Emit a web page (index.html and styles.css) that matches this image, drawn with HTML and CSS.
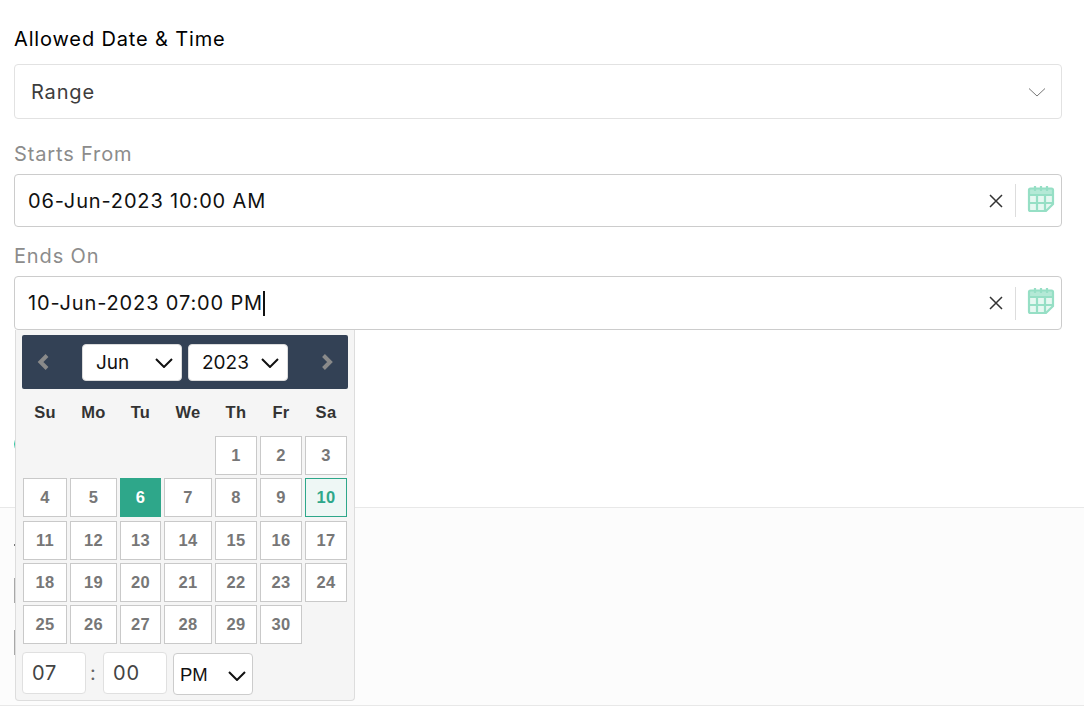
FILE: index.html
```html
<!DOCTYPE html>
<html lang="en">
<head>
  <meta charset="UTF-8">
  <title>Allowed Date &amp; Time</title>
  <link rel="stylesheet" href="styles.css">
</head>
<body>

  <div class="form-top">
    <h4 class="field-title">Allowed Date &amp; Time</h4>
    <div class="select-box">
      <span>Range</span>
      <svg class="chevron" width="18" height="10" viewBox="0 0 18 10"><path d="M1 1.5l8 7.5 8-7.5" /></svg>
    </div>

    <label class="field-label">Starts From</label>
    <div class="date-input">
      <span class="date-value">06-Jun-2023 10:00 AM</span>
      <svg class="clear-icon" width="14" height="14" viewBox="0 0 14 14"><path d="M1 1l12 12M13 1L1 13" /></svg>
      <span class="divider"></span>
      <svg class="cal-icon" width="28" height="28" viewBox="0 0 28 28"><path class="cal-fill" d="M2 9h24v9l-8 8H4a2 2 0 0 1-2-2z" /><path class="cal-band" d="M2 3.500h24v6H2z" /><path d="M3.500 3.500h21a1.500 1.500 0 0 1 1.500 1.500v14l-7 7H3.500A1.500 1.500 0 0 1 2 24.500V5a1.500 1.500 0 0 1 1.500-1.500zM2 10h24M2 18h24M10 10v16M18 10v16M8 1v5M14 1v5M20 1v5" /></svg>
    </div>

    <label class="field-label second">Ends On</label>
    <div class="date-input tall">
      <span class="date-value">10-Jun-2023 07:00 PM<i class="caret"></i></span>
      <svg class="clear-icon" width="14" height="14" viewBox="0 0 14 14"><path d="M1 1l12 12M13 1L1 13" /></svg>
      <span class="divider"></span>
      <svg class="cal-icon" width="28" height="28" viewBox="0 0 28 28"><path class="cal-fill" d="M2 9h24v9l-8 8H4a2 2 0 0 1-2-2z" /><path class="cal-band" d="M2 3.500h24v6H2z" /><path d="M3.500 3.500h21a1.500 1.500 0 0 1 1.500 1.500v14l-7 7H3.500A1.500 1.500 0 0 1 2 24.500V5a1.500 1.500 0 0 1 1.500-1.500zM2 10h24M2 18h24M10 10v16M18 10v16M8 1v5M14 1v5M20 1v5" /></svg>
    </div>

    <!-- mostly hidden behind the popup -->
    <div class="toggle"></div>
  </div>

  <div class="form-bottom">
    <div class="stub-dot"></div>
    <div class="stub-box"></div>
    <div class="stub-box"></div>
  </div>

  <!-- Date picker popup -->
  <div class="picker">
    <div class="picker-head">
      <svg class="nav" width="14" height="18" viewBox="0 0 14 18"><path d="M11 2.500L4.500 9l6.500 6.500" /></svg>
      <div class="head-selects">
        <div class="mini-select month">Jun<svg width="20" height="11" viewBox="0 0 20 11"><path d="M2 2l8 8 8-8" /></svg></div>
        <div class="mini-select year">2023<svg width="20" height="11" viewBox="0 0 20 11"><path d="M2 2l8 8 8-8" /></svg></div>
      </div>
      <svg class="nav" width="14" height="18" viewBox="0 0 14 18"><path d="M3.500 2.500L10 9l-6.500 6.500" /></svg>
    </div>

    <div class="cal-grid days">
      <span>Su</span><span>Mo</span><span>Tu</span><span>We</span><span>Th</span><span>Fr</span><span>Sa</span>
    </div>

    <div class="cal-grid dates" id="dates"></div>

    <div class="time-row">
      <div class="time-box">07</div>
      <span class="colon">:</span>
      <div class="time-box">00</div>
      <div class="mini-select ampm">PM<svg width="20" height="11" viewBox="0 0 20 11"><path d="M2 2l8 8 8-8" /></svg></div>
    </div>
  </div>

  <script>
    const container = document.getElementById('dates');
    let html = '<span class="blank"></span>'.repeat(4);
    for (let d = 1; d <= 30; d++) {
      const cls = d === 6 ? 'cell active' : d === 10 ? 'cell end' : 'cell';
      html += `<a class="${cls}">${d}</a>`;
    }
    container.innerHTML = html;
  </script>

</body>
</html>
```

FILE: styles.css
```css
* {
  box-sizing: border-box;
  margin: 0;
  padding: 0;
}

body {
  font-family: Inter, 'Liberation Sans', sans-serif;
  background: #ffffff;
  color: #000000;
  height: 710px;
  overflow: hidden;
  position: relative;
}

.form-top {
  height: 507px;
  padding: 27px 22px 0 14px;
}

.field-title {
  font-size: 20px;
  font-weight: 400;
  letter-spacing: 0.85px;
  line-height: 24px;
  margin-bottom: 13px;
}

.select-box {
  height: 55px;
  border: 1px solid #e2e2e2;
  border-radius: 4px;
  padding: 0 15px 0 16px;
  display: flex;
  align-items: center;
  justify-content: space-between;
  font-size: 20px;
  letter-spacing: 0.85px;
  color: #3d3d3d;
}

.chevron path {
  fill: none;
  stroke: #777777;
  stroke-width: 1;
}

.field-label {
  display: block;
  font-size: 20px;
  letter-spacing: 0.85px;
  line-height: 24px;
  color: #8c8c8c;
  margin-top: 23px;
  margin-bottom: 8px;
}

.field-label.second {
  margin-top: 17px;
}

.date-input {
  height: 53px;
  border: 1px solid #cccccc;
  border-radius: 4px;
  padding: 0 6px 0 13px;
  display: flex;
  align-items: center;
}

.date-input.tall {
  height: 54px;
}

.date-value {
  flex: 1;
  font-size: 20px;
  letter-spacing: 0.85px;
  color: #111111;
  display: flex;
  align-items: center;
}

.caret {
  display: inline-block;
  width: 2px;
  height: 25px;
  background: #111111;
}

.clear-icon path {
  fill: none;
  stroke: #333333;
  stroke-width: 1.5;
}

.divider {
  width: 1px;
  height: 33px;
  background: #dddddd;
  margin: 0 11px 0 12px;
}

.cal-icon {
  margin-bottom: 4px;
}

.cal-icon path {
  fill: none;
  stroke: #96dfc5;
  stroke-width: 2.2;
}

.cal-icon path.cal-fill {
  fill: #e6f8f1;
  stroke: none;
}

.cal-icon path.cal-band {
  fill: #b4e9d6;
  stroke: none;
}

.toggle {
  width: 30px;
  height: 20px;
  margin-top: 104px;
  border-radius: 10px;
  background: #2ec4a0;
}

.form-bottom {
  height: 199px;
  padding: 36px 0 0 14px;
  background: #fcfcfc;
  border-top: 1px solid #e8e8e8;
  border-bottom: 1px solid #e8e8e8;
}

.stub-dot {
  width: 10px;
  height: 2px;
  background: #777777;
}

.stub-box {
  width: 10px;
  height: 25px;
  margin-top: 32px;
  background: #a8a8a8;
}

.stub-box + .stub-box {
  margin-top: 27px;
}

/* popup */
.picker {
  position: absolute;
  left: 15px;
  top: 330px;
  width: 340px;
  height: 371px;
  background: #f5f5f5;
  border: 1px solid #dddddd;
  border-top: none;
  border-radius: 0 0 4px 4px;
  padding: 5px 6px 0 6px;
  font-family: 'Liberation Sans', Arial, sans-serif;
}

.picker-head {
  height: 54px;
  background: #334155;
  border-radius: 2px;
  display: flex;
  align-items: center;
  justify-content: space-between;
  padding: 0 14px;
}

.nav path {
  fill: none;
  stroke: #8a8a8a;
  stroke-width: 4;
}

.head-selects {
  display: flex;
  gap: 6px;
}

.mini-select {
  width: 100px;
  height: 37px;
  background: #ffffff;
  border-radius: 4px;
  border: 1px solid #dcdcdc;
  display: flex;
  align-items: center;
  justify-content: space-between;
  padding: 1px 7px 0 13px;
  font-family: Inter, sans-serif;
  font-size: 19px;
  color: #111111;
}

.mini-select svg path {
  fill: none;
  stroke: #111111;
  stroke-width: 2;
}

.cal-grid {
  display: grid;
  grid-template-columns: 44px 47px 41px 48px 42px 42px 42px;
  column-gap: 3px;
  margin-left: 1px;
}

.days {
  height: 47px;
  align-items: center;
  text-align: center;
  font-size: 16.500px;
  font-weight: 700;
  letter-spacing: 0.3px;
  color: #333333;
}

.dates {
  grid-auto-rows: 39px;
  row-gap: 3.250px;
}

.cell {
  background: #ffffff;
  border: 1px solid #c9c9c9;
  display: flex;
  align-items: center;
  justify-content: center;
  font-size: 16.500px;
  font-weight: 700;
  letter-spacing: 0.3px;
  color: #777777;
}

.cell.active {
  background: #2ea78a;
  border-color: #2ea78a;
  color: #ffffff;
}

.cell.end {
  background: #eef7f5;
  border-color: #2ea78a;
  color: #2ea78a;
}

.time-row {
  display: flex;
  align-items: flex-start;
  margin-top: 8px;
}

.time-box {
  width: 64px;
  height: 42px;
  background: #ffffff;
  border: 1px solid #e0e0e0;
  border-radius: 4px;
  padding-left: 9px;
  display: flex;
  align-items: center;
  font-family: Inter, sans-serif;
  font-size: 20px;
  letter-spacing: 0.85px;
  color: #444444;
}

.colon {
  width: 17px;
  margin-top: 9px;
  padding-right: 3px;
  text-align: center;
  font-family: Inter, sans-serif;
  font-size: 20px;
  color: #666666;
}

.mini-select.ampm {
  width: 80px;
  height: 42px;
  margin-left: 6px;
  margin-top: 1px;
  padding: 2px 5px 0 6px;
  font-family: 'Liberation Sans', sans-serif;
  font-size: 18.500px;
  border-color: #cccccc;
}
```
